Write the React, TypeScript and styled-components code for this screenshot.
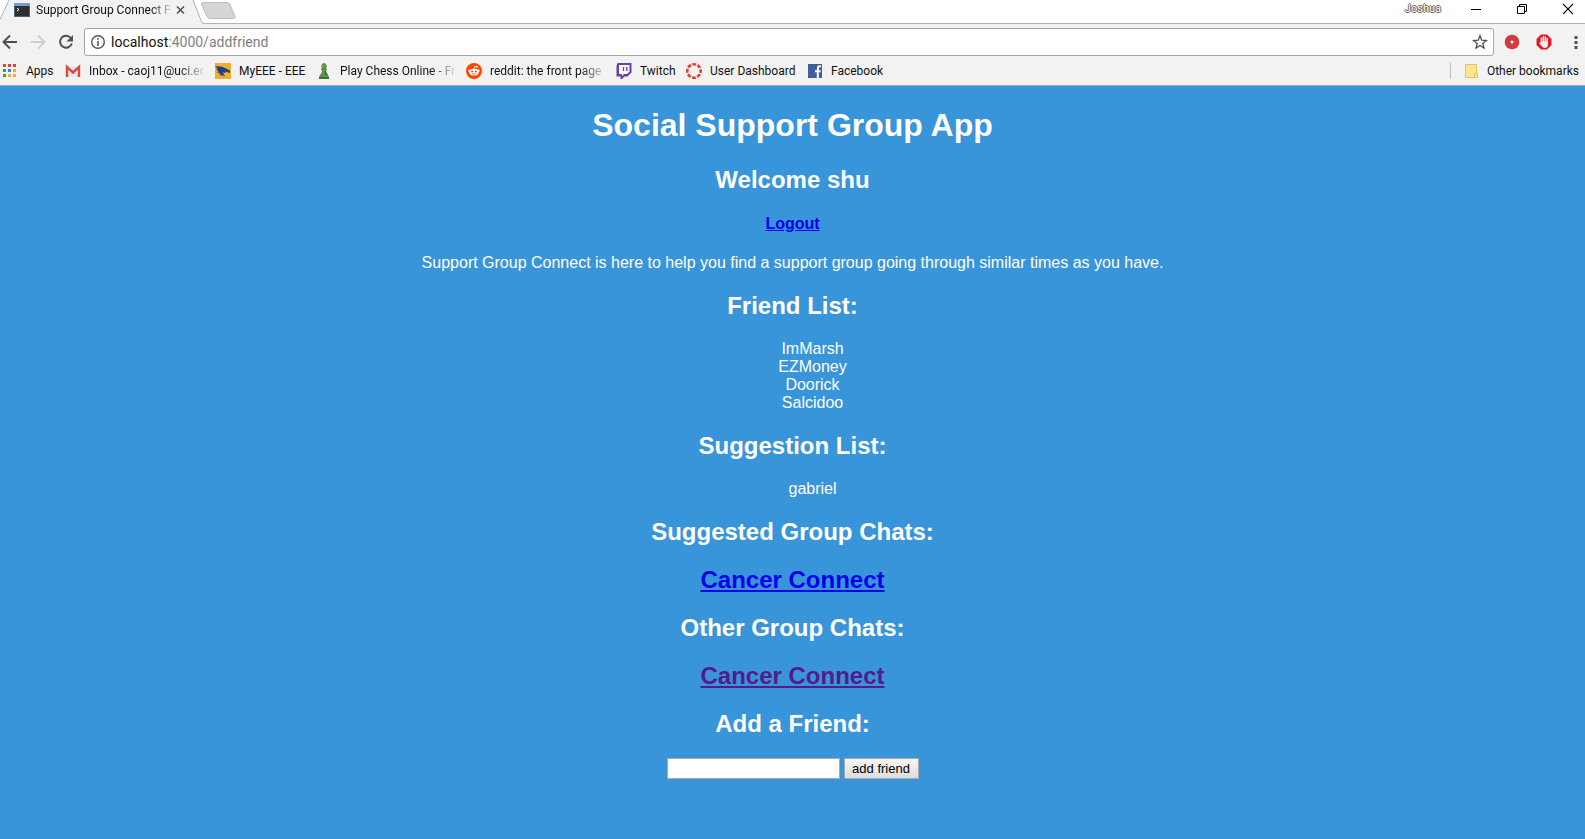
import React from "react";
import styled, { createGlobalStyle } from "styled-components";

const GlobalStyle = createGlobalStyle`
  *, *::before, *::after { box-sizing: border-box; }
  body {
    margin: 0;
    background: #3895da;
    font-family: "Liberation Sans", Arial, sans-serif;
  }
`;

const Screen = styled.div`
  display: flex;
  flex-direction: column;
  min-height: 100vh;
`;

const uiFont = `Roboto, "Segoe UI", sans-serif`;

const Chrome = styled.header`
  background: #f2f2f2;
  border-bottom: 1px solid #a6a6a6;
  font-family: ${uiFont};
  font-size: 12px;
  line-height: 16px;
  color: #111;
`;

const TitleBar = styled.div`
  display: flex;
  height: 24px;
  background: linear-gradient(#fff, #fff) 0 0 / 100% 23px no-repeat, #b4b4b4;
`;

const Tab = styled.div`
  display: grid;
  width: 204px;
  height: 24px;
  > * { grid-area: 1 / 1; }
`;

const TabContent = styled.div`
  display: flex;
  align-items: center;
  height: 20px;
  padding-left: 14px;
  gap: 6px;
`;

const TabTitle = styled.span`
  width: 134px;
  overflow: hidden;
  white-space: nowrap;
  mask-image: linear-gradient(90deg, #000 114px, transparent 138px);
`;

const IconButton = styled.button<{ $w?: number }>`
  display: flex;
  flex: none;
  align-items: center;
  justify-content: center;
  width: ${(p) => p.$w ?? 16}px;
  height: 16px;
  padding: 0;
  border: 0;
  background: none;
`;

const NewTab = styled.button`
  width: 40px;
  height: 24px;
  padding: 0;
  border: 0;
  background: none;
  margin-left: -4px;
  display: flex;
`;

const UserName = styled.span`
  margin: 1px 30px 0 auto;
  font-size: 11px;
  line-height: 16px;
  color: #fff;
  text-shadow: 1px 0 #666, -1px 0 #666, 0 1px #666, 0 -1px #666;
`;

const WindowControls = styled.div`
  display: flex;
  align-items: center;
  height: 18px;
  gap: 36px;
  padding-right: 12px;
`;

const Toolbar = styled.div`
  display: flex;
  align-items: center;
  height: 36px;
  padding: 0 0 0 2px;
`;

const NavButtons = styled.div`
  display: flex;
  gap: 12px;
  width: 82px;
`;

const AddressBar = styled.div`
  display: flex;
  flex: 1;
  align-items: center;
  height: 28px;
  padding: 0 5px;
  gap: 5px;
  background: #fff;
  border: 1px solid #a6a6a6;
  border-radius: 3px;
`;

const AddressField = styled.label`
  display: grid;
  flex: 1;
  font: 14px/20px Roboto, sans-serif;
  > * { grid-area: 1 / 1; }
`;

const AddressText = styled.span`
  color: #808080;
  pointer-events: none;
  b { font-weight: 400; color: #111; }
`;

const AddressInput = styled.input`
  width: 100%;
  padding: 0;
  border: 0;
  outline: 0;
  background: none;
  font: inherit;
`;

const Extensions = styled.div`
  display: flex;
  gap: 16px;
  padding: 0 1px 0 10px;
`;

const Bookmarks = styled.nav`
  display: flex;
  align-items: center;
  height: 25px;
  padding: 0 6px 4px 2px;
  gap: 12px;
`;

const Bookmark = styled.a`
  display: flex;
  align-items: center;
  gap: 8px;
  color: inherit;
  text-decoration: none;
  white-space: nowrap;
  svg { flex: none; }
`;

const BookmarkLabel = styled.span<{ $w: number; $fade?: boolean }>`
  width: ${(p) => p.$w}px;
  overflow: ${(p) => (p.$fade ? "hidden" : "visible")};
  mask-image: ${(p) => (p.$fade ? "linear-gradient(90deg, #000 90px, transparent 118px)" : "none")};
`;

const OtherBookmarks = styled.div`
  margin-left: auto;
  padding-left: 12px;
  border-left: 1px solid #bdbdbd;
`;

const Page = styled.main`
  flex: 1;
  padding: 21px 8px 60px;
  text-align: center;
  font-size: 16px;
  line-height: 18px;
  color: #fff;
`;

const Title = styled.h1`
  margin: 0 0 22px;
  font-size: 32px;
  line-height: 37px;
`;

const Heading = styled.h2`
  margin: 0 0 20px;
  font-size: 24px;
  line-height: 28px;
`;

const LogoutLine = styled.h4`
  margin: 21px 0;
`;

const Intro = styled.p`
  margin: 0 0 20px;
`;

const PageLink = styled.a<{ $visited?: boolean }>`
  color: ${(p) => (p.$visited ? "#551a8b" : "#0000ee")};
`;

const People = styled.ul`
  margin: 0 0 20px;
  padding: 0 0 0 40px;
  list-style: none;
`;

const FriendForm = styled.form`
  display: flex;
  justify-content: center;
  gap: 4px;
`;

const FriendInput = styled.input`
  width: 173px;
  height: 21px;
  padding: 1px;
  border: 1px solid #a9a9a9;
  border-radius: 0;
  background: #fff;
  font: 13px "Liberation Sans", Arial, sans-serif;
`;

const FriendButton = styled.button`
  width: 75px;
  height: 21px;
  padding: 0;
  border: 1px solid #a9a9a9;
  border-radius: 0;
  background: linear-gradient(#f6f6f6, #dddddd);
  color: #000;
  font: 13px "Liberation Sans", Arial, sans-serif;
`;

const Icon = ({ children, w = 16 }: { children: React.ReactNode; w?: number }) => (
  <svg width={w} height="16" viewBox={`0 0 ${w} 16`} aria-hidden="true">
    {children}
  </svg>
);

const AppsIcon = () => {
  const colors = ["#f04035", "#f04035", "#f04035", "#34a05a", "#2684fc", "#fbae17", "#34a05a", "#fbae17", "#fbae17"];
  return (
    <Icon>
      {colors.map((c, i) => (
        <rect key={i} x={1 + (i % 3) * 5} y={1 + Math.floor(i / 3) * 5} width="3" height="3" fill={c} />
      ))}
    </Icon>
  );
};

const GmailIcon = () => (
  <Icon>
    <path d="M1 3h14v11H1z" fill="#efeaea" />
    <path d="M3 13l5-4 5 4" fill="none" stroke="#d5d0d0" />
    <path d="M2 14V4L8 9.500 14 4V14" fill="none" stroke="#d54b3d" strokeWidth="2.400" />
  </Icon>
);

const EeeIcon = () => (
  <Icon>
    <path d="M0 0h16v16H0z" fill="#efb02c" />
    <path d="M0 3.500Q6 2.500 10 5l5 2.500V10l-5-1.500 1 1.500-3-.8 2 4.800-2.500-2.500V14L5.800 11l-.6 2.500L4.300 9.500l-2 .5 1-2L1 6.500l2-.6z" fill="#273e83" />
  </Icon>
);

const ChessIcon = () => (
  <Icon>
    <path d="M8 0a3 3 0 0 1 2 5l1 1v1H10c0 2 .5 3.500 2 5l1 2v2H3v-2l1-2c1.500-1.500 2-3 2-5H5V6l1-1a3 3 0 0 1 2-5z" fill="#5c9146" />
    <path d="M3 14h10v2H3zM9 7h1c0 2 .5 3.500 2 5H9z" fill="#3f7136" />
    <path d="M7 2v2" stroke="#8ab974" />
  </Icon>
);

const RedditIcon = () => (
  <Icon>
    <circle cx="8" cy="8" r="8" fill="#ff4500" />
    <ellipse cx="8" cy="9.200" rx="4.600" ry="3.400" fill="#fff" />
    <circle cx="3.500" cy="7.700" r="1.200" fill="#fff" />
    <circle cx="12.500" cy="7.700" r="1.200" fill="#fff" />
    <circle cx="11" cy="3.700" r="1" fill="#fff" />
    <path d="M8 6l.6-2.600 2.400.4" fill="none" stroke="#fff" strokeWidth=".8" />
    <circle cx="6.200" cy="8.500" r="1" fill="#ff4500" />
    <circle cx="9.800" cy="8.500" r="1" fill="#ff4500" />
    <path d="M6 10.700q2 1.200 4 0" fill="none" stroke="#ff4500" strokeWidth=".8" />
  </Icon>
);

const TwitchIcon = () => (
  <Icon>
    <path d="M1.500 0H15.500V9.500L11.500 13.500H8.500L6 16H4.500V13.500H.5V3z" fill="#6441a5" />
    <path d="M3 2H13.500V8.500L11 11H8L6 13V11H3z" fill="#fff" />
    <path d="M7.500 4v4M10.800 4v4" stroke="#6441a5" strokeWidth="1.400" />
  </Icon>
);

const CanvasIcon = () => (
  <Icon>
    <circle cx="8" cy="8" r="6.700" fill="none" stroke="#e13f30" strokeWidth="2.600" strokeDasharray="3.860 1.400" strokeDashoffset="1.900" />
  </Icon>
);

const FacebookIcon = () => (
  <Icon>
    <path d="M1 1h14v14H1z" fill="#415e9b" />
    <path d="M14 3.300h-1.600c-1 0-1.400.5-1.400 1.400V7M8 8.200h5.600M10.800 6v9" fill="none" stroke="#fff" strokeWidth="2" />
  </Icon>
);

const FolderIcon = () => (
  <Icon>
    <path d="M2.500 1.500h11v9h1v4h-12z" fill="#ffe591" stroke="#e8c15a" />
    <path d="M11.500 14v-3.500h2" fill="none" stroke="#e8c15a" />
  </Icon>
);

const bookmarks = [
  { label: "Apps", w: 27, icon: <AppsIcon /> },
  { label: "Inbox - caoj11@uci.ed", w: 114, fade: true, icon: <GmailIcon /> },
  { label: "MyEEE - EEE", w: 65, icon: <EeeIcon /> },
  { label: "Play Chess Online - Fr", w: 114, fade: true, icon: <ChessIcon /> },
  { label: "reddit: the front page", w: 114, fade: true, icon: <RedditIcon /> },
  { label: "Twitch", w: 34, icon: <TwitchIcon /> },
  { label: "User Dashboard", w: 85, icon: <CanvasIcon /> },
  { label: "Facebook", w: 52, icon: <FacebookIcon /> },
];

const BrowserChrome = () => (
  <Chrome>
    <TitleBar>
      <Tab>
        <svg width="204" height="24" viewBox="0 0 204 24" aria-hidden="true">
          <path d="M0 24V20L9 0H193L202.500 23.500H204V24z" fill="#f2f2f2" />
          <path d="M0 19.500L9 0M193 0L201.500 21.500Q202 23.500 204 23.500" fill="none" stroke="#b0b0b0" />
        </svg>
        <TabContent>
          <Icon>
            <path d="M0 1h16v14H0z" fill="#5a6065" />
            <path d="M0 1h16v3H0z" fill="#6a9fe0" />
            <path d="M12 2h3v1h-3z" fill="#d87777" />
            <path d="M1 4h14v10H1z" fill="#2b2f32" />
            <path d="M3 6l2 1.500L3 9" fill="none" stroke="#fff" />
          </Icon>
          <TabTitle>Support Group Connect P</TabTitle>
          <IconButton $w={9} aria-label="Close tab">
            <Icon w={9}><path d="M1 4.500l7 7M8 4.500l-7 7" stroke="#555" strokeWidth="1.600" /></Icon>
          </IconButton>
        </TabContent>
      </Tab>
      <NewTab aria-label="New tab">
        <svg width="40" height="24" viewBox="0 0 40 24" aria-hidden="true">
          <path d="M3 2.500H27Q29 2.500 30 4.500L35 16.500Q35.500 18.500 33.500 18.500H10Q8 18.500 7 16.500L1.500 4.500Q1 2.500 3 2.500z" fill="#d5d5d5" stroke="#bcbcbc" />
        </svg>
      </NewTab>
      <UserName>Joshua</UserName>
      <WindowControls>
        <IconButton $w={10} aria-label="Minimize">
          <Icon w={10}><path d="M0 8.500h10" stroke="#000" /></Icon>
        </IconButton>
        <IconButton $w={10} aria-label="Restore">
          <Icon w={10}><path d="M.5 5.500h7v7h-7zM2.500 5.500v-2h7v7h-2" fill="none" stroke="#000" /></Icon>
        </IconButton>
        <IconButton $w={10} aria-label="Close">
          <Icon w={10}><path d="M0 3l10 10M10 3L0 13" stroke="#000" strokeWidth="1.100" /></Icon>
        </IconButton>
      </WindowControls>
    </TitleBar>
    <Toolbar>
      <NavButtons>
        <IconButton aria-label="Back">
          <Icon><path d="M15 8H2M8 1.500L1.500 8 8 14.500" fill="none" stroke="#505050" strokeWidth="2" /></Icon>
        </IconButton>
        <IconButton aria-label="Forward">
          <Icon><path d="M1 8h13M8 1.500L14.500 8 8 14.500" fill="none" stroke="#cfcfcf" strokeWidth="2" /></Icon>
        </IconButton>
        <IconButton aria-label="Reload">
          <Icon>
            <path d="M12.800 4A6 6 0 1 0 13.800 9.500" fill="none" stroke="#505050" strokeWidth="2" />
            <path d="M15 1v6.500H8.500z" fill="#505050" />
          </Icon>
        </IconButton>
      </NavButtons>
      <AddressBar>
        <IconButton aria-label="Site information">
          <Icon>
            <circle cx="8" cy="8" r="6.300" fill="none" stroke="#555" strokeWidth="1.400" />
            <path d="M8 4v1.700M8 7v5" stroke="#555" strokeWidth="1.600" />
          </Icon>
        </IconButton>
        <AddressField>
          <AddressText><b>localhost</b>:4000/addfriend</AddressText>
          <AddressInput aria-label="Address" />
        </AddressField>
        <IconButton aria-label="Bookmark this page">
          <Icon>
            <path d="M8 1.800l1.700 4.400 4.700.3-3.600 3 1.200 4.600L8 11.500l-4 2.600 1.200-4.600-3.600-3 4.700-.3z" fill="none" stroke="#505050" strokeWidth="1.300" />
          </Icon>
        </IconButton>
      </AddressBar>
      <Extensions>
        <IconButton aria-label="Recorder">
          <Icon>
            <circle cx="8" cy="8" r="7.300" fill="#d23c40" />
            <circle cx="8" cy="8" r="1.500" fill="#fff" />
          </Icon>
        </IconButton>
        <IconButton aria-label="Ad blocker">
          <Icon>
            <path d="M5 .5h6L15.500 5v6L11 15.500H5L.5 11V5z" fill="#e01b20" />
            <path d="M5.400 9V4.200M7.400 8V2.800M9.400 8V3M11.300 9V4.500" stroke="#f5eeee" strokeWidth="1.500" strokeLinecap="round" />
            <path d="M4.700 7.500H12V10q0 4-3.300 4Q7 14 5.500 12L3.300 9.200q.4-1.200 1.400-.4z" fill="#f5eeee" />
          </Icon>
        </IconButton>
        <IconButton aria-label="Menu">
          <Icon>
            <path d="M6.500 2h3v3h-3zM6.500 7h3v3h-3zM6.500 12h3v3h-3z" fill="#555" />
          </Icon>
        </IconButton>
      </Extensions>
    </Toolbar>
    <Bookmarks aria-label="Bookmarks">
      {bookmarks.map((b) => (
        <Bookmark href="#" key={b.label}>
          {b.icon}
          <BookmarkLabel $w={b.w} $fade={b.fade}>{b.label}</BookmarkLabel>
        </Bookmark>
      ))}
      <OtherBookmarks>
        <Bookmark href="#">
          <FolderIcon />
          <span>Other bookmarks</span>
        </Bookmark>
      </OtherBookmarks>
    </Bookmarks>
  </Chrome>
);

const friends = ["ImMarsh", "EZMoney", "Doorick", "Salcidoo"];
const suggestions = ["gabriel"];

export default function App() {
  return (
    <Screen>
      <GlobalStyle />
      <BrowserChrome />
      <Page>
        <Title>Social Support Group App</Title>
        <Heading>Welcome shu</Heading>
        <LogoutLine><PageLink href="#">Logout</PageLink></LogoutLine>
        <Intro>Support Group Connect is here to help you find a support group going through similar times as you have.</Intro>
        <Heading>Friend List:</Heading>
        <People>{friends.map((f) => <li key={f}>{f}</li>)}</People>
        <Heading>Suggestion List:</Heading>
        <People>{suggestions.map((s) => <li key={s}>{s}</li>)}</People>
        <Heading>Suggested Group Chats:</Heading>
        <Heading><PageLink href="#">Cancer Connect</PageLink></Heading>
        <Heading>Other Group Chats:</Heading>
        <Heading><PageLink href="#" $visited>Cancer Connect</PageLink></Heading>
        <Heading id="add-friend">Add a Friend:</Heading>
        <FriendForm onSubmit={(e) => e.preventDefault()}>
          <FriendInput type="text" aria-labelledby="add-friend" />
          <FriendButton type="submit">add friend</FriendButton>
        </FriendForm>
      </Page>
    </Screen>
  );
}
